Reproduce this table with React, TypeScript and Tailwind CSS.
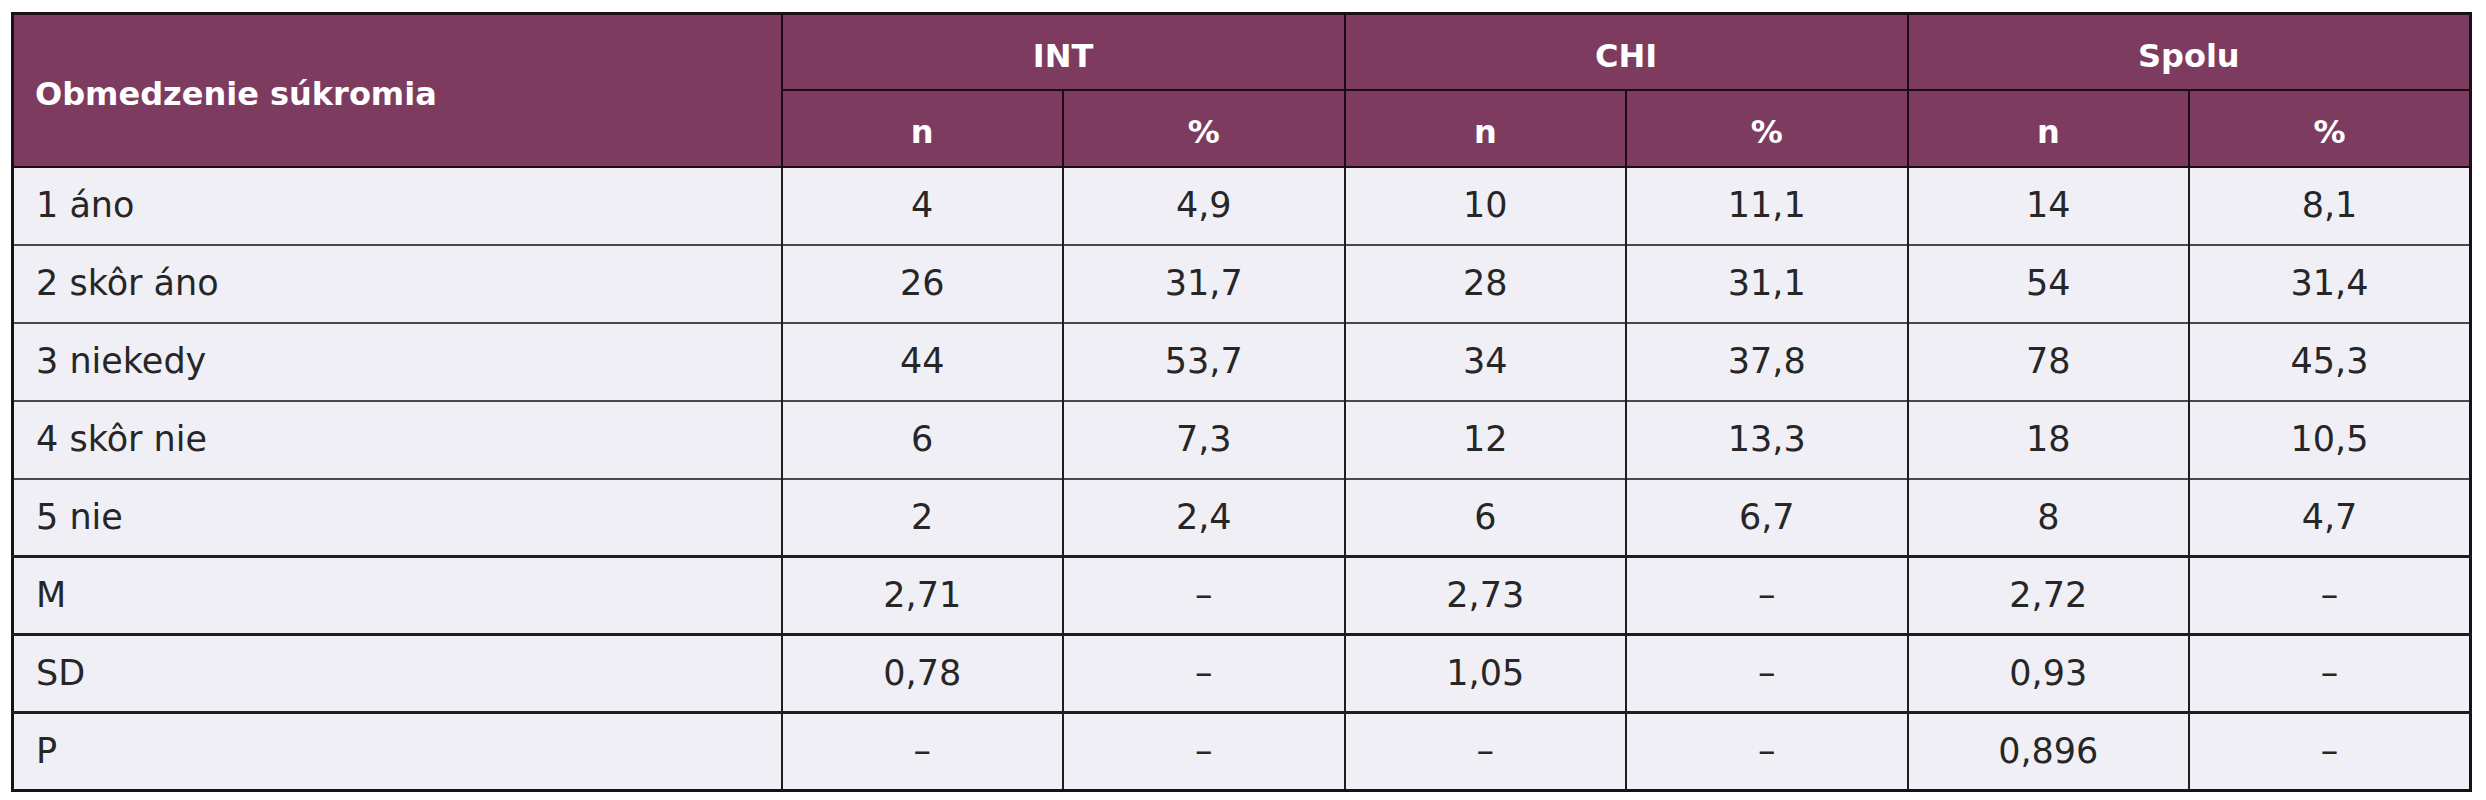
const rows: string[][] = [
  ['1 áno', '4', '4,9', '10', '11,1', '14', '8,1'],
  ['2 skôr áno', '26', '31,7', '28', '31,1', '54', '31,4'],
  ['3 niekedy', '44', '53,7', '34', '37,8', '78', '45,3'],
  ['4 skôr nie', '6', '7,3', '12', '13,3', '18', '10,5'],
  ['5 nie', '2', '2,4', '6', '6,7', '8', '4,7'],
  ['M', '2,71', '–', '2,73', '–', '2,72', '–'],
  ['SD', '0,78', '–', '1,05', '–', '0,93', '–'],
  ['P', '–', '–', '–', '–', '0,896', '–'],
]

const groups = ['INT', 'CHI', 'Spolu']

export default function App() {
  return (
    <div className="w-[2486px] h-[800px] bg-white pt-[12px] pl-[11px] font-['DejaVu_Sans',sans-serif]">
      <table className="w-[2459px] table-fixed border-collapse border-[3px] border-[#1c1018]">
        <colgroup>
          <col className="w-[769px]" />
          {[0, 1, 2, 3, 4, 5].map((i) => (
            <col key={i} className="w-[281.5px]" />
          ))}
        </colgroup>
        <thead className="bg-[#7d3c5f] text-white font-bold text-[32px]">
          <tr className="h-[76px]">
            <th
              rowSpan={2}
              className="text-left font-bold pl-[21px] pt-[8px] border-[2px] border-[#1c0a14]"
            >
              Obmedzenie súkromia
            </th>
            {groups.map((g) => (
              <th key={g} colSpan={2} className="text-center font-bold pt-[8px] border-[2px] border-[#1c0a14]">
                {g}
              </th>
            ))}
          </tr>
          <tr className="h-[77px]">
            {groups.map((g) => (
              <>
                <th key={g + 'n'} className="text-center font-bold pt-[8px] border-[2px] border-[#1c0a14]">
                  n
                </th>
                <th key={g + 'p'} className="text-center font-bold pt-[8px] border-[2px] border-[#1c0a14]">
                  %
                </th>
              </>
            ))}
          </tr>
        </thead>
        <tbody className="bg-[#f0eff6] text-[#262626] text-[35px]">
          {rows.map((r, ri) => (
            <tr
              key={ri}
              className={`h-[78px] ${ri >= 5 ? 'border-t-[3px] border-t-[#1e1e1e]' : 'border-t-[2px] border-t-[#4a4a4a]'}`}
            >
              {r.map((c, ci) => (
                <td
                  key={ci}
                  className={`${ci === 0 ? 'text-left pl-[22px]' : 'text-center'} border-x-[2px] border-x-[#1e1e1e]`}
                >
                  {c}
                </td>
              ))}
            </tr>
          ))}
        </tbody>
      </table>
    </div>
  )
}
